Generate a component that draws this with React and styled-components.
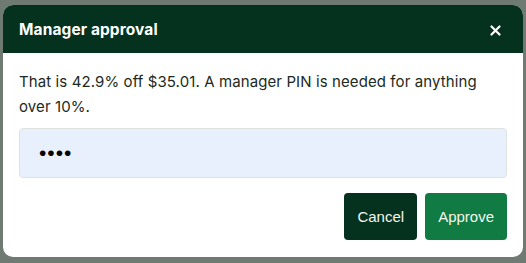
import React from 'react'
import styled, { createGlobalStyle } from 'styled-components'

const GlobalStyle = createGlobalStyle`
  html, body {
    margin: 0;
    padding: 0;
    width: 526px;
    height: 263px;
    overflow: hidden;
  }
  body {
    font-family: Inter, "Noto Sans", sans-serif;
  }
`;

const Backdrop = styled.div`
  width: 526px;
  height: 263px;
  background: #6e7a72;
  padding: 5px 3px 6px 3px;
  box-sizing: border-box;
`;

const Dialog = styled.div`
  width: 520px;
  height: 252px;
  background: #ffffff;
  border-radius: 10px;
  overflow: hidden;
  display: flex;
  flex-direction: column;
`;

const Header = styled.div`
  height: 48px;
  background: #05321e;
  display: flex;
  align-items: center;
  justify-content: space-between;
  padding: 0 22px 0 16px;
  box-sizing: border-box;
`;

const Title = styled.h2`
  margin: 0;
  color: #ffffff;
  font-size: 15.5px;
  font-weight: 700;
  letter-spacing: 0.1px;
`;

const CloseButton = styled.button`
  border: none;
  background: transparent;
  padding: 0;
  display: flex;
  cursor: pointer;
  margin-top: 3px;
`;

const Body = styled.div`
  flex: 1;
  padding: 16px 16px 17px;
  display: flex;
  flex-direction: column;
`;

const Message = styled.p`
  margin: 0 0 9px;
  font-size: 15px;
  line-height: 25px;
  color: #1c2a22;
  letter-spacing: 0.1px;
`;

const PinInput = styled.input`
  height: 50px;
  box-sizing: border-box;
  border: 1px solid #e0e2de;
  border-radius: 4px;
  background: #e8f0fe;
  padding: 0 19px;
  font-family: "Liberation Sans", Arial, sans-serif;
  font-size: 21px;
  letter-spacing: 1px;
  color: #000;
  outline: none;
`;

const Actions = styled.div`
  margin-top: auto;
  display: flex;
  justify-content: flex-end;
  gap: 8px;
`;

const ActionButton = styled.button`
  height: 47px;
  padding: 0 13px;
  border: none;
  border-radius: 4px;
  font-family: "Liberation Sans", Arial, sans-serif;
  font-size: 15px;
  color: #f4f7f0;
  background: ${(p) => (p.primary ? '#107b42' : '#05321e')};
  cursor: pointer;
`;

const App = () => {
  return (
    <>
      <GlobalStyle />
      <Backdrop>
        <Dialog>
          <Header>
            <Title>Manager approval</Title>
            <CloseButton aria-label="Close">
              <svg width="11" height="11" viewBox="0 0 11 11">
                <path d="M1.5 1.5 L9.5 9.5 M9.5 1.5 L1.5 9.5" stroke="#fff" strokeWidth="2.2" strokeLinecap="round" />
              </svg>
            </CloseButton>
          </Header>
          <Body>
            <Message>
              That is 42.9% off $35.01. A manager PIN is needed for anything over 10%.
            </Message>
            <PinInput type="password" defaultValue="1234" />
            <Actions>
              <ActionButton>Cancel</ActionButton>
              <ActionButton primary>Approve</ActionButton>
            </Actions>
          </Body>
        </Dialog>
      </Backdrop>
    </>
  )
}

export default App
